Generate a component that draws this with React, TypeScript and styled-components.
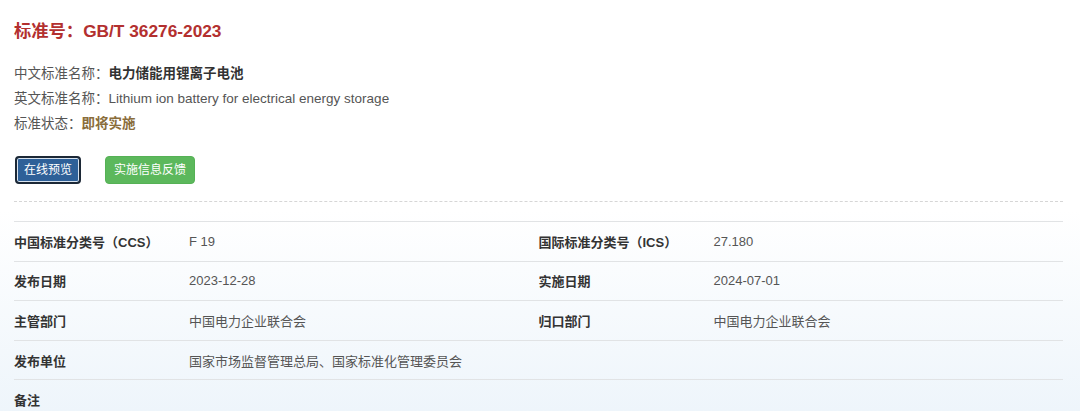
import styled, { createGlobalStyle } from "styled-components";

const GlobalStyle = createGlobalStyle`
  html, body {
    margin: 0;
    padding: 0;
  }
  body {
    font-family: "Liberation Sans", "Noto Sans CJK SC", sans-serif;
    font-size: 13px;
    color: #333;
    background: linear-gradient(to bottom, #ffffff 0px, #ffffff 210px, #eef5fb 411px);
    min-height: 411px;
  }
`;

interface Field {
  label: string;
  value: string;
}

const rows: Field[][] = [
  [
    { label: "中国标准分类号（CCS）", value: "F 19" },
    { label: "国际标准分类号（ICS）", value: "27.180" },
  ],
  [
    { label: "发布日期", value: "2023-12-28" },
    { label: "实施日期", value: "2024-07-01" },
  ],
  [
    { label: "主管部门", value: "中国电力企业联合会" },
    { label: "归口部门", value: "中国电力企业联合会" },
  ],
  [{ label: "发布单位", value: "国家市场监督管理总局、国家标准化管理委员会" }],
  [{ label: "备注", value: "" }],
];

function App() {
  return (
    <Page>
      <GlobalStyle />
      <Title>标准号：GB/T 36276-2023</Title>

      <Info>
        <InfoLine>
          中文标准名称：<Strong>电力储能用锂离子电池</Strong>
        </InfoLine>
        <InfoLine>英文标准名称：Lithium ion battery for electrical energy storage</InfoLine>
        <InfoLine>
          标准状态：<Status>即将实施</Status>
        </InfoLine>
      </Info>

      <Actions>
        <Button $variant="primary">在线预览</Button>
        <Button $variant="success">实施信息反馈</Button>
      </Actions>

      <Dashed />

      <Table>
        {rows.map((row, i) => (
          <Row key={i}>
            {row.map((f) => (
              <Cell key={f.label}>
                <Label>{f.label}</Label>
                <Value>{f.value}</Value>
              </Cell>
            ))}
          </Row>
        ))}
      </Table>
    </Page>
  );
}

export default App;

const Page = styled.div`
  padding: 19px 17px 0 14px;
`;

const Title = styled.h1`
  margin: 0;
  font-size: 17.3px;
  line-height: 24px;
  font-weight: 700;
  color: #b3302f;
`;

const Info = styled.div`
  margin-top: 18px;
`;

const InfoLine = styled.div`
  font-size: 13.5px;
  line-height: 25px;
  color: #555;
`;

const Strong = styled.span`
  font-weight: 700;
  color: #333;
`;

const Status = styled.span`
  font-weight: 700;
  color: #8a6d3b;
`;

const Actions = styled.div`
  display: flex;
  align-items: center;
  column-gap: 24px;
  margin-top: 20px;
  padding-left: 1px;
`;

const Button = styled.button<{ $variant: "primary" | "success" }>`
  font-family: inherit;
  font-size: 12px;
  line-height: 18px;
  border-radius: 4px;
  color: #fff;
  cursor: pointer;
  padding: ${(p) => (p.$variant === "primary" ? "3px 7px" : "4px 8px")};
  border: ${(p) => (p.$variant === "primary" ? "2px solid #1c2836" : "1px solid #55b155")};
  background: ${(p) => (p.$variant === "primary" ? "#2e6098" : "#5cb85c")};
  box-shadow: ${(p) => (p.$variant === "primary" ? "inset 0 0 0 1px #d8e3ef" : "none")};
`;

const Dashed = styled.div`
  margin-top: 17px;
  border-top: 1px dashed #d6d6d6;
`;

const Table = styled.div`
  margin-top: 19px;
`;

const Row = styled.div`
  display: grid;
  grid-template-columns: 1fr 1fr;
  border-top: 1px solid #e1e3e5;
  height: 38.6px;
`;

const Cell = styled.div`
  display: grid;
  grid-template-columns: 175px 1fr;
  align-items: center;
`;

const Label = styled.div`
  font-weight: 700;
  color: #333;
  font-size: 13px;
`;

const Value = styled.div`
  color: #555;
  font-size: 13px;
`;
